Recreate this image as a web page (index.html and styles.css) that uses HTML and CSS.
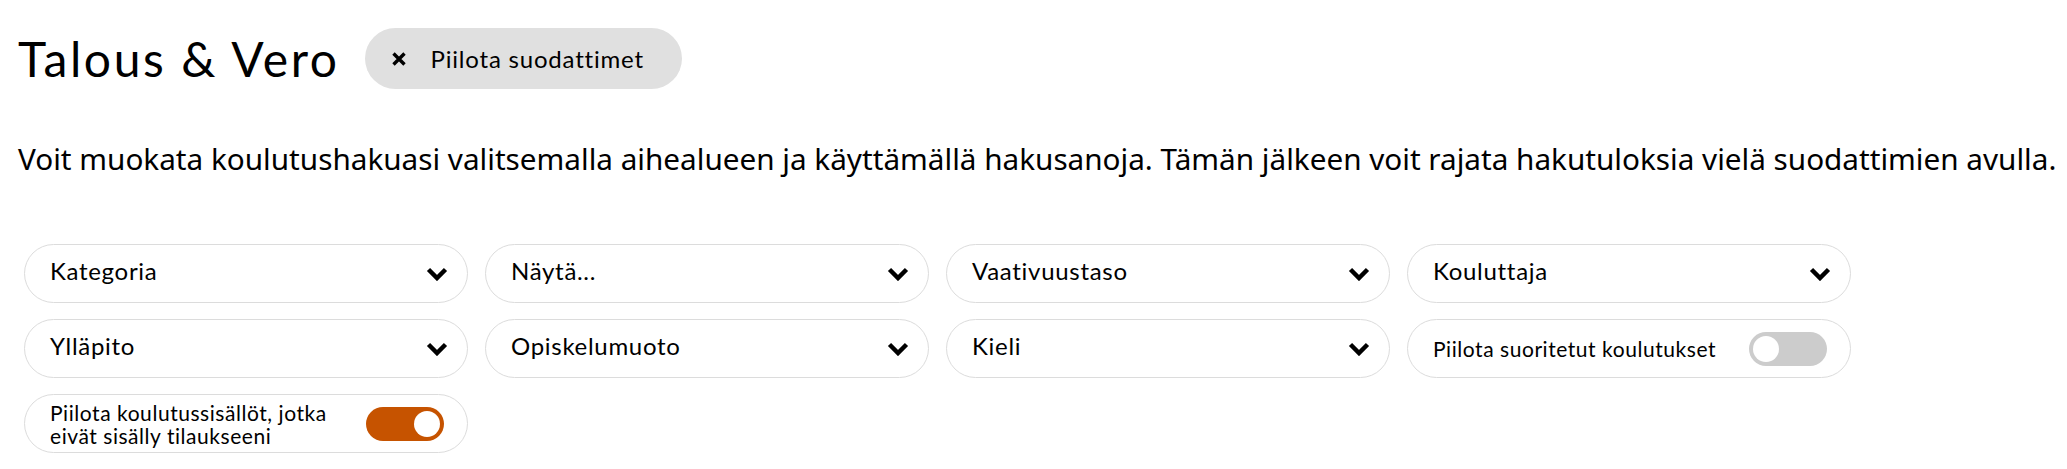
FILE: index.html
```html
<!DOCTYPE html>
<html lang="fi">
<head>
    <meta charset="UTF-8">
    <meta name="viewport" content="width=device-width, initial-scale=1.0">
    <title>Talous &amp; Vero</title>
    <link rel="stylesheet" href="styles.css">
</head>
<body>
    <div class="header">
        <h1>Talous &amp; Vero</h1>
        <button class="hide-filters">
            <svg class="close-icon" width="14" height="14" viewBox="0 0 14 14"><path d="M1.5 1.5 L12.5 12.5 M12.5 1.5 L1.5 12.5" stroke="#000" stroke-width="3.4" fill="none"/></svg>
            Piilota suodattimet
        </button>
    </div>

    <p class="intro">Voit muokata koulutushakuasi valitsemalla aihealueen ja käyttämällä hakusanoja. Tämän jälkeen voit rajata hakutuloksia vielä suodattimien avulla.</p>

    <div class="filters">
        <div class="filter select">
            <span>Kategoria</span>
            <svg class="chevron" width="22" height="14" viewBox="0 0 22 14"><path d="M2.5 2.5 L11 11 L19.5 2.5" stroke="#000" stroke-width="4.5" fill="none"/></svg>
        </div>
        <div class="filter select">
            <span>Näytä...</span>
            <svg class="chevron" width="22" height="14" viewBox="0 0 22 14"><path d="M2.5 2.5 L11 11 L19.5 2.5" stroke="#000" stroke-width="4.5" fill="none"/></svg>
        </div>
        <div class="filter select">
            <span>Vaativuustaso</span>
            <svg class="chevron" width="22" height="14" viewBox="0 0 22 14"><path d="M2.5 2.5 L11 11 L19.5 2.5" stroke="#000" stroke-width="4.5" fill="none"/></svg>
        </div>
        <div class="filter select">
            <span>Kouluttaja</span>
            <svg class="chevron" width="22" height="14" viewBox="0 0 22 14"><path d="M2.5 2.5 L11 11 L19.5 2.5" stroke="#000" stroke-width="4.5" fill="none"/></svg>
        </div>
        <div class="filter select">
            <span>Ylläpito</span>
            <svg class="chevron" width="22" height="14" viewBox="0 0 22 14"><path d="M2.5 2.5 L11 11 L19.5 2.5" stroke="#000" stroke-width="4.5" fill="none"/></svg>
        </div>
        <div class="filter select">
            <span>Opiskelumuoto</span>
            <svg class="chevron" width="22" height="14" viewBox="0 0 22 14"><path d="M2.5 2.5 L11 11 L19.5 2.5" stroke="#000" stroke-width="4.5" fill="none"/></svg>
        </div>
        <div class="filter select">
            <span>Kieli</span>
            <svg class="chevron" width="22" height="14" viewBox="0 0 22 14"><path d="M2.5 2.5 L11 11 L19.5 2.5" stroke="#000" stroke-width="4.5" fill="none"/></svg>
        </div>
        <div class="filter toggle">
            <span>Piilota suoritetut koulutukset</span>
            <span class="switch"><span class="knob"></span></span>
        </div>
        <div class="filter toggle">
            <span>Piilota koulutussisällöt, jotka<br>eivät sisälly tilaukseeni</span>
            <span class="switch on"><span class="knob"></span></span>
        </div>
    </div>
</body>
</html>
```

FILE: styles.css
```css
body {
    margin: 0;
    font-family: "Noto Sans", sans-serif;
    color: #000;
    background: #fff;
}
.header {
    display: flex;
    align-items: center;
    gap: 25px;
    padding: 28px 18px 0;
}
h1 {
    margin: 0;
    font-family: Lato, sans-serif;
    font-size: 48px;
    font-weight: 400;
    letter-spacing: 2.6px;
}
.hide-filters {
    display: flex;
    align-items: center;
    gap: 25px;
    height: 61px;
    padding: 0 38px 0 27px;
    border: none;
    border-radius: 31px;
    background-color: #e0e0e0;
    font-family: Lato, sans-serif;
    font-size: 24px;
    letter-spacing: 0.8px;
    color: #000;
}
.intro {
    margin: 50px 0 0 18px;
    font-size: 29.7px;
    line-height: 40px;
    white-space: nowrap;
}
.filters {
    display: grid;
    grid-template-columns: repeat(4, 444px);
    column-gap: 17px;
    row-gap: 16px;
    margin: 65px 0 0 24px;
}
.filter {
    display: flex;
    align-items: center;
    justify-content: space-between;
    height: 59px;
    box-sizing: border-box;
    border: 1px solid #dcdcdc;
    border-radius: 30px;
    font-family: Lato, sans-serif;
}
.select {
    padding: 0 19px 0 25px;
    font-size: 24px;
    letter-spacing: 0.7px;
}
.select span {
    margin-top: -6px;
}
.toggle {
    padding: 0 23px 0 25px;
    font-size: 21px;
    line-height: 23px;
    letter-spacing: 0.55px;
}
.switch {
    display: flex;
    align-items: center;
    width: 78px;
    height: 34px;
    padding: 0 4px;
    box-sizing: border-box;
    border-radius: 17px;
    background-color: #cccccc;
}
.switch.on {
    justify-content: flex-end;
    background-color: #c65300;
}
.knob {
    width: 26px;
    height: 26px;
    border-radius: 50%;
    background: #fff;
}
```
